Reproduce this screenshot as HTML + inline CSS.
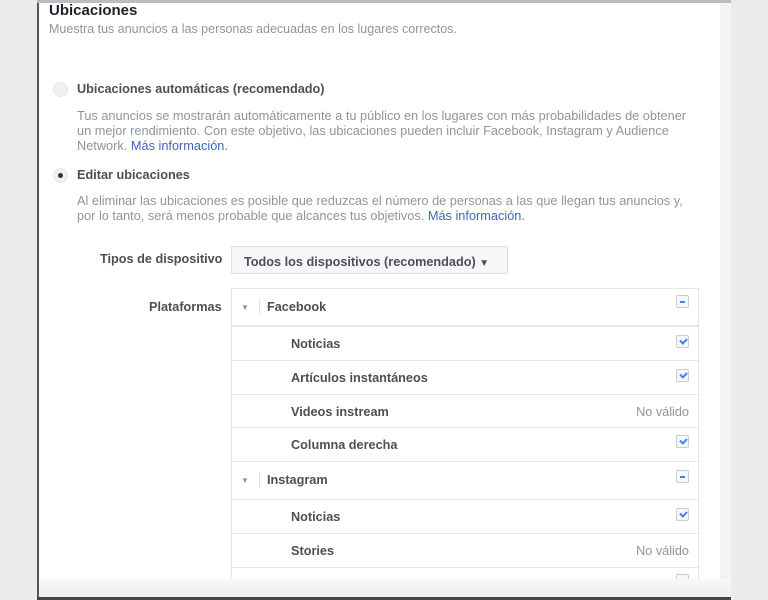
<!DOCTYPE html>
<html><head><meta charset="utf-8"><style>
body{margin:0;width:768px;height:600px;background:#eceaeb;position:relative;overflow:hidden;font-family:"Liberation Sans",Arial,sans-serif}
.a{position:absolute;white-space:nowrap}
#panel{position:absolute;left:37px;top:0;width:694px;height:600px;background:#fff;border-left:2px solid #555;box-sizing:border-box}
.b{font-weight:bold;color:#4b4f56;font-size:12.7px}
.g{color:#90949c;font-size:12.75px;line-height:15px}
.lnk{color:#4267b2}
.row{position:absolute;left:231px;width:468px;border-top:1px solid #e5e6e9;box-sizing:border-box}
.cb{position:absolute;right:9px;width:11px;height:11px;border:1px solid #c9ccd1;border-radius:2px;background:#f6f7f9}
.chk::after{content:"";position:absolute;left:3px;top:2px;width:5px;height:3px;border-left:2px solid #4080ff;border-bottom:2px solid #4080ff;transform:rotate(-45deg)}
.min::after{content:"";position:absolute;left:3px;top:5px;width:5px;height:1.5px;background:#4080ff}
.nv{position:absolute;right:9px;color:#90949c;font-size:12.7px}
</style></head><body>
<div id="panel"></div>
<div class="a" style="left:37px;top:0;width:694px;height:3px;background:#bdbdbd"></div>
<div class="a" style="left:720px;top:3px;width:11px;height:576px;background:#f3f2f4"></div>
<div class="a" style="left:39px;top:579px;width:692px;height:18px;background:linear-gradient(#f8f8f9,#eeeef0)"></div>
<div class="a" style="left:37px;top:597px;width:694px;height:3px;background:#444"></div>

<div class="a" style="left:49px;top:2px;font-size:15px;font-weight:bold;color:#1d2129">Ubicaciones</div>
<div class="a g" style="left:49px;top:22px;font-size:12.5px">Muestra tus anuncios a las personas adecuadas en los lugares correctos.</div>

<div class="a" style="left:53px;top:82px;width:13px;height:13px;border-radius:50%;background:#f0f0f2;border:1px solid #e6e6e8"></div>
<div class="a b" style="left:77px;top:82px">Ubicaciones automáticas (recomendado)</div>
<div class="a g" style="left:77px;top:108px">Tus anuncios se mostrarán automáticamente a tu público en los lugares con más probabilidades de obtener<br>un mejor rendimiento. Con este objetivo, las ubicaciones pueden incluir Facebook, Instagram y Audience<br>Network. <span class="lnk">Más información.</span></div>

<div class="a" style="left:53px;top:168px;width:13px;height:13px;border-radius:50%;background:#f0f0f2;border:1px solid #e6e6e8"></div>
<div class="a" style="left:58px;top:173px;width:5px;height:5px;border-radius:50%;background:#333"></div>
<div class="a b" style="left:77px;top:168px">Editar ubicaciones</div>
<div class="a g" style="left:77px;top:193px">Al eliminar las ubicaciones es posible que reduzcas el número de personas a las que llegan tus anuncios y,<br>por lo tanto, será menos probable que alcances tus objetivos. <span class="lnk">Más información.</span></div>

<div class="a b" style="left:100px;top:252px">Tipos de dispositivo</div>
<div class="a b" style="left:231px;top:246px;width:277px;height:28px;box-sizing:border-box;background:#f6f7f9;border:1px solid #dddfe2;border-radius:2px;padding:8px 0 0 12px">Todos los dispositivos (recomendado) <span style="font-size:10px">▼</span></div>

<div class="a b" style="left:149px;top:300px">Plataformas</div>

<div class="row" style="top:288px;height:38px;border:1px solid #e5e6e9">
 <span class="a" style="left:9px;top:14px;font-size:8px;color:#90949c">▼</span>
 <span class="a" style="left:27px;top:10px;width:1px;height:16px;background:#e5e6e9"></span>
 <span class="a b" style="left:35px;top:11px">Facebook</span>
 <span class="cb min" style="top:6px"></span></div>
<div class="row" style="top:326px;height:34px;border-left:1px solid #e5e6e9;border-right:1px solid #e5e6e9"><span class="a b" style="left:59px;top:10px">Noticias</span><span class="cb chk" style="top:8px"></span></div>
<div class="row" style="top:360px;height:34px;border-left:1px solid #e5e6e9;border-right:1px solid #e5e6e9"><span class="a b" style="left:59px;top:10px">Artículos instantáneos</span><span class="cb chk" style="top:8px"></span></div>
<div class="row" style="top:394px;height:33px;border-left:1px solid #e5e6e9;border-right:1px solid #e5e6e9"><span class="a b" style="left:59px;top:10px">Videos instream</span><span class="nv" style="top:10px">No válido</span></div>
<div class="row" style="top:427px;height:34px;border-left:1px solid #e5e6e9;border-right:1px solid #e5e6e9"><span class="a b" style="left:59px;top:10px">Columna derecha</span><span class="cb chk" style="top:7px"></span></div>
<div class="row" style="top:461px;height:38px;border-left:1px solid #e5e6e9;border-right:1px solid #e5e6e9">
 <span class="a" style="left:9px;top:14px;font-size:8px;color:#90949c">▼</span>
 <span class="a" style="left:27px;top:10px;width:1px;height:16px;background:#e5e6e9"></span>
 <span class="a b" style="left:35px;top:11px">Instagram</span>
 <span class="cb min" style="top:8px"></span></div>
<div class="row" style="top:499px;height:34px;border-left:1px solid #e5e6e9;border-right:1px solid #e5e6e9"><span class="a b" style="left:59px;top:10px">Noticias</span><span class="cb chk" style="top:8px"></span></div>
<div class="row" style="top:533px;height:34px;border-left:1px solid #e5e6e9;border-right:1px solid #e5e6e9"><span class="a b" style="left:59px;top:10px">Stories</span><span class="nv" style="top:10px">No válido</span></div>
<div class="row" style="top:567px;height:12px;border-left:1px solid #e5e6e9;border-right:1px solid #e5e6e9;overflow:hidden"><span class="cb" style="top:6px"></span></div>
</body></html>
